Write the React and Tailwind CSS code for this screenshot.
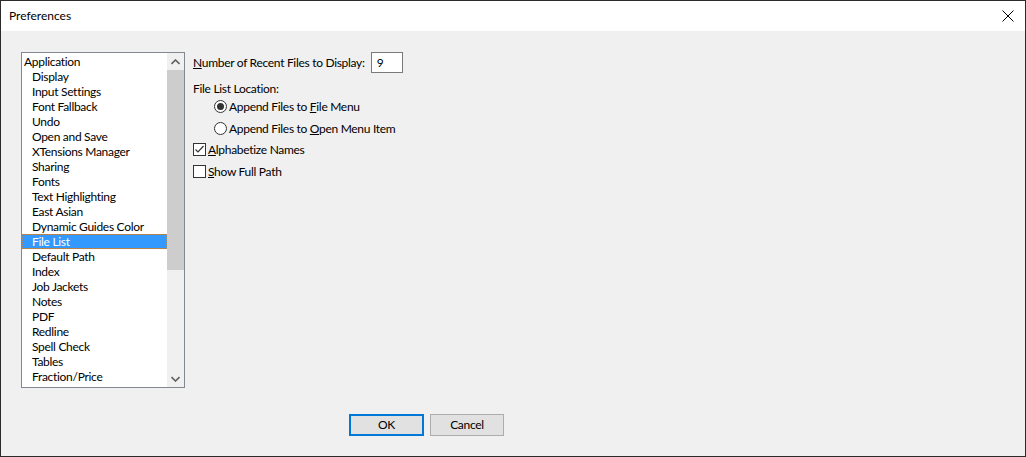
import { useState } from 'react';

const ITEMS = [
  'Display',
  'Input Settings',
  'Font Fallback',
  'Undo',
  'Open and Save',
  'XTensions Manager',
  'Sharing',
  'Fonts',
  'Text Highlighting',
  'East Asian',
  'Dynamic Guides Color',
  'File List',
  'Default Path',
  'Index',
  'Job Jackets',
  'Notes',
  'PDF',
  'Redline',
  'Spell Check',
  'Tables',
  'Fraction/Price',
];

export default function App() {
  const [selected, setSelected] = useState('File List');
  const [recent, setRecent] = useState('9');
  const [location, setLocation] = useState('file');
  const [alpha, setAlpha] = useState(true);
  const [fullPath, setFullPath] = useState(false);

  return (
    <div
      className="w-[1026px] h-[457px] border border-[#2b2b2b] bg-[#f0f0f0] flex flex-col text-[12px] tracking-[-0.3px] text-black overflow-hidden"
      style={{ fontFamily: 'Lato, "Noto Sans", sans-serif' }}
    >
      {/* title bar */}
      <div className="h-[30px] bg-white flex items-center justify-between pl-[8px] pr-[10px]">
        <span className="text-[12px] tracking-normal">Preferences</span>
        <svg width="12" height="12" viewBox="0 0 12 12" className="mr-[1px]">
          <path d="M0.5 0.5 L11.5 11.5 M11.5 0.5 L0.5 11.5" stroke="#000" strokeWidth="1" />
        </svg>
      </div>

      <div className="flex pl-[20px] pt-[21px]">
        {/* category list */}
        <div className="w-[164px] h-[336px] border border-[#828790] bg-white flex">
          <div className="flex-1 pt-[1px] leading-[15px] overflow-hidden">
            <div className="pl-[2px] h-[15px]">Application</div>
            {ITEMS.map((it) => (
              <div
                key={it}
                onClick={() => setSelected(it)}
                className={
                  it === selected
                    ? 'pl-[9px] h-[15px] leading-[13px] bg-[#3399ff] text-white border border-dotted border-[#b8864e]'
                    : 'pl-[10px] h-[15px]'
                }
              >
                {it}
              </div>
            ))}
          </div>
          <div className="w-[17px] bg-[#f0f0f0] flex flex-col">
            <div className="h-[17px] flex items-center justify-center">
              <svg width="9" height="6" viewBox="0 0 9 6">
                <path d="M0.5 5 L4.5 1 L8.5 5" stroke="#606060" strokeWidth="1.6" fill="none" />
              </svg>
            </div>
            <div className="h-[200px] bg-[#cdcdcd]" />
            <div className="flex-1" />
            <div className="h-[17px] flex items-center justify-center">
              <svg width="9" height="6" viewBox="0 0 9 6">
                <path d="M0.5 1 L4.5 5 L8.5 1" stroke="#606060" strokeWidth="1.6" fill="none" />
              </svg>
            </div>
          </div>
        </div>

        {/* options */}
        <div className="pl-[8px] flex flex-col">
          <div className="flex items-center h-[21px]">
            <span>
              <u>N</u>umber of Recent Files to Display:
            </span>
            <input
              value={recent}
              onChange={(e) => setRecent(e.target.value)}
              className="ml-[6px] w-[32px] h-[21px] border border-[#7a7a7a] bg-white px-[5px] text-[12px] outline-none"
            />
          </div>
          <div className="mt-[7px] h-[17px] leading-[17px]">File List Location:</div>
          <div className="pl-[21px]">
            <Radio checked={location === 'file'} onClick={() => setLocation('file')} className="mt-[1px]">
              Append Files to <u>F</u>ile Menu
            </Radio>
            <Radio checked={location === 'open'} onClick={() => setLocation('open')} className="mt-[5px]">
              Append Files to <u>O</u>pen Menu Item
            </Radio>
          </div>
          <Check checked={alpha} onClick={() => setAlpha(!alpha)} className="mt-[4px]">
            <u>A</u>lphabetize Names
          </Check>
          <Check checked={fullPath} onClick={() => setFullPath(!fullPath)} className="mt-[5px]">
            <u>S</u>how Full Path
          </Check>
        </div>
      </div>

      {/* buttons */}
      <div className="flex pl-[348px] pt-[26px] gap-[6px]">
        <button className="w-[75px] h-[22px] border-2 border-[#0078d7] bg-[#e1e1e1] text-[12px]">OK</button>
        <button className="w-[74px] h-[22px] border border-[#adadad] bg-[#e1e1e1] text-[12px]">Cancel</button>
      </div>
    </div>
  );
}

function Radio({ checked, onClick, className, children }) {
  return (
    <div onClick={onClick} className={`flex items-center h-[17px] ${className}`}>
      <span className="w-[13px] h-[13px] rounded-full border border-[#333] bg-white flex items-center justify-center mr-[2px]">
        {checked && <span className="w-[7px] h-[7px] rounded-full bg-[#333]" />}
      </span>
      <span>{children}</span>
    </div>
  );
}

function Check({ checked, onClick, className, children }) {
  return (
    <div onClick={onClick} className={`flex items-center h-[17px] ${className}`}>
      <span className="w-[13px] h-[13px] border border-[#333] bg-white flex items-center justify-center mr-[2px]">
        {checked && (
          <svg width="11" height="11" viewBox="0 0 11 11">
            <path d="M1.5 5.5 L4 8 L9.5 2" stroke="#333" strokeWidth="1.2" fill="none" />
          </svg>
        )}
      </span>
      <span>{children}</span>
    </div>
  );
}
